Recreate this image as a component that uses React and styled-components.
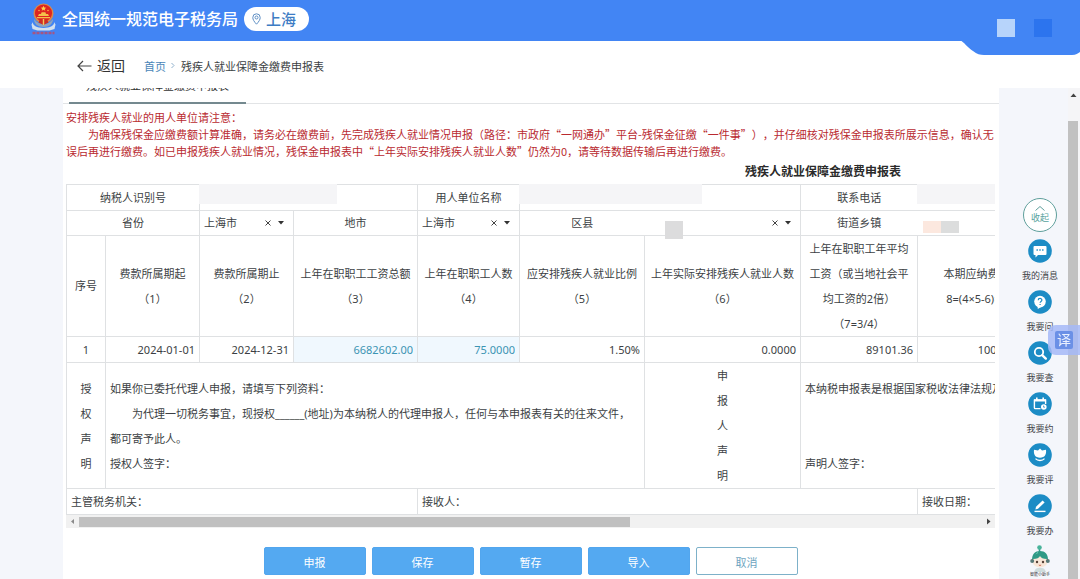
import React from "react";
import styled, { createGlobalStyle } from "styled-components";

const Global = createGlobalStyle`
  * { box-sizing: border-box; }
  body {
    margin: 0;
    background: #fff;
    color: #3c3f44;
    font-family: "Noto Sans", "Noto Sans CJK SC", sans-serif;
    font-size: 11px;
    text-spacing-trim: space-all;
  }
  button, input, select { font: inherit; color: inherit; margin: 0; padding: 0; border: 0; background: none; }
  button { cursor: pointer; }
  a { text-decoration: none; color: inherit; }
`;

const Page = styled.div`
  display: flex;
  flex-direction: column;
  height: 100vh;
  overflow: hidden;
`;

const TopBar = styled.header`
  position: relative;
  display: flex;
  align-items: center;
  flex: none;
  height: 41px;
  padding: 0 28px 4px 30px;
  background: #4285f4;
`;

const Emblem = styled.svg`
  width: 27px;
  height: 34px;
  flex: none;
`;

const SiteName = styled.h1`
  margin: 0 6px 0 5px;
  color: #fff;
  font-size: 16px;
  line-height: 24px;
  font-weight: 500;
  white-space: nowrap;
`;

const CityPill = styled.button`
  display: flex;
  align-items: center;
  gap: 5px;
  height: 24px;
  padding: 0 13px 0 8px;
  border-radius: 12px;
  background: #fff;
  color: #3d7cc4;
  font-size: 15px;
  font-weight: 500;
  line-height: 22px;
`;

const AccountNotch = styled.svg`
  position: absolute;
  right: 0;
  top: 40px;
  width: 120px;
  height: 16px;
`;

const Account = styled.div`
  position: relative;
  display: flex;
  gap: 19px;
  margin-left: auto;
  padding-top: 18px;
`;

const AccountTile = styled.span`
  width: 18px;
  height: 18px;
  background: ${(p) => p.$color};
`;

const CrumbBar = styled.nav`
  display: flex;
  align-items: center;
  flex: none;
  height: 47px;
  padding: 2px 0 0 77px;
`;

const Back = styled.a`
  display: flex;
  align-items: center;
  gap: 5px;
  margin-right: 19px;
  color: #333;
  font-size: 14px;
  line-height: 20px;
`;

const CrumbLink = styled.a`
  color: #4a86b8;
`;

const CrumbSep = styled.svg`
  width: 4px;
  height: 7px;
  margin: 0 6px 0 5px;
`;

const Body = styled.div`
  display: flex;
  flex: 1;
  min-height: 0;
  padding-left: 63px;
  background: #f4f6fb;
  overflow: hidden;
`;

const Main = styled.main`
  flex: 1;
  min-width: 0;
  background: #fff;
`;

const TabBar = styled.div`
  display: flex;
  height: 36px;
  margin-top: -20px;
  padding-left: 6px;
  border-bottom: 1px solid #e2e4e6;
`;

const Tab = styled.button`
  height: 36px;
  padding: 0 17px;
  border-bottom: 2px solid #74898f;
  color: #333;
`;

const Sheet = styled.section`
  padding: 5px 4px 0 3px;
`;

const Notice = styled.div`
  color: #b92a30;
  font-family: "Noto Sans CJK SC", sans-serif;
  line-height: 17px;

  p { margin: 0; }
  p + p { text-indent: 2em; }
`;

const TableViewport = styled.div`
  overflow: hidden;
`;

const FormTable = styled.table`
  width: 1514px;
  table-layout: fixed;
  border-collapse: collapse;
  line-height: 24px;

  caption {
    height: 24px;
    color: #2b2b2b;
    font-size: 12px;
    line-height: 24px;
    font-weight: 700;
  }
`;

const Row = styled.tr`
  height: ${(p) => p.$height || 26}px;
`;

const Cell = styled.td`
  padding: 0 4px;
  border: 1px solid #dfe1e3;
  border-left-style: ${(p) => (p.$openLeft ? "none" : "solid")};
  border-right-style: ${(p) => (p.$openRight ? "none" : "solid")};
  font-weight: 400;
  text-align: ${(p) => p.$align || "center"};
  vertical-align: middle;
  white-space: nowrap;
  background: ${(p) => (p.$editable ? "#f0f8fe" : "transparent")};
`;

const FlushCell = styled(Cell)`
  padding: 0;
  vertical-align: top;
`;

const Mask = styled.span`
  position: relative;
  display: block;
  width: ${(p) => p.$width}px;
  height: 20px;
  margin: -1px 0 0 -1px;
  background: #f5f5f7;
`;

const Field = styled.div`
  display: flex;
  align-items: center;
  height: 24px;
  padding: 0 9px 0 4px;
`;

const Picker = styled.select`
  flex: 1;
  min-width: 0;
  appearance: none;
  outline: 0;
`;

const ClearButton = styled.button`
  display: flex;
  margin-right: 7px;
`;

const Chip = styled.span`
  width: 18px;
  height: ${(p) => p.$height || 12}px;
  background: ${(p) => p.$color};
`;

const ChipRow = styled.div`
  display: flex;
  align-items: flex-end;
  height: 24px;
  padding: 0 0 2px ${(p) => p.$indent}px;
`;

const ChipField = styled(Field)`
  align-items: center;

  ${ChipRow} { height: 28px; padding-bottom: 0; margin-bottom: -4px; }
`;

const AmountInput = styled.input`
  display: block;
  width: 100%;
  height: 24px;
  color: #3b94b3;
  text-align: right;
  outline: 0;
`;

const Lines = styled.div`
  line-height: 25px;

  p { margin: 0; min-height: 25px; }
`;

const Indented = styled.p`
  text-indent: 2em;
`;

const HScroll = styled.div`
  display: flex;
  align-items: center;
  height: 13px;
  background: #f1f1f1;
`;

const ScrollArrow = styled.svg`
  flex: none;
  width: 13px;
  height: 13px;
`;

const HTrack = styled.div`
  flex: 1;
  height: 10px;
`;

const HThumb = styled.div`
  width: 61%;
  height: 100%;
  background: #c0c0c0;
`;

const Actions = styled.div`
  display: flex;
  justify-content: center;
  gap: 6px;
  padding-top: 19px;
`;

const ActionButton = styled.button`
  width: 102px;
  height: 28px;
  padding-top: 2px;
  border: 1px solid ${(p) => (p.$plain ? "#7db1c9" : "#52a6ee")};
  border-radius: 2px;
  background: ${(p) => (p.$plain ? "#fff" : "#54a9f1")};
  color: ${(p) => (p.$plain ? "#6fa5c0" : "#fff")};
`;

const Rail = styled.aside`
  display: flex;
  flex-direction: column;
  align-items: center;
  flex: none;
  width: 69px;
  padding: 110px 0 0 13px;
`;

const Collapse = styled.button`
  display: flex;
  flex-direction: column;
  align-items: center;
  width: 34px;
  height: 34px;
  margin-bottom: 7px;
  padding-top: 7px;
  border: 1px solid #5f9f9c;
  border-radius: 50%;
  background: #fff;
  color: #58a39d;
  font-size: 9px;
  line-height: 13px;
`;

const RailItem = styled.a`
  display: flex;
  flex-direction: column;
  align-items: center;
  gap: 5px;
  height: 51px;
  font-size: 9px;
  line-height: 16px;
  color: #3f4348;
  white-space: nowrap;
`;

const RailIcon = styled.svg`
  width: 24px;
  height: 24px;
`;

const Assistant = styled.a`
  display: flex;
  flex-direction: column;
  align-items: center;
  color: #333;
  font-size: 4px;
  line-height: 6px;
`;

const VScroll = styled.div`
  display: flex;
  flex-direction: column;
  flex: none;
  width: 12px;
  background: #f5f5f7;
`;

const VThumb = styled.div`
  flex: 1;
  width: 10px;
  margin-top: 20px;
  background: #c1c1c1;
`;

const Translate = styled.button`
  position: fixed;
  right: 0;
  top: 325px;
  display: flex;
  align-items: center;
  width: 32px;
  height: 30px;
  padding-left: 7px;
  border-radius: 8px 0 0 8px;
  background: rgba(165, 185, 247, 0.85);
`;

const TranslateMark = styled.span`
  width: 18px;
  height: 18px;
  border-radius: 2px;
  background: #6b90e6;
  color: #e9f0ff;
  font-size: 14px;
  line-height: 18px;
`;

const columnWidths = [39, 94, 94, 124, 102, 125, 156, 117, 118];

const headings = [
  ["费款所属期起", "（1）"],
  ["费款所属期止", "（2）"],
  ["上年在职职工工资总额", "（3）"],
  ["上年在职职工人数", "（4）"],
  ["应安排残疾人就业比例", "（5）"],
  ["上年实际安排残疾人就业人数", "（6）"],
  ["上年在职职工年平均", "工资（或当地社会平", "均工资的2倍）", "（7=3/4）"],
  ["本期应纳费额", "8=(4×5-6)×7"],
];

const railItems = [
  {
    label: "我的消息",
    icon: (
      <>
        <path d="M6.5 7h11a1 1 0 0 1 1 1v7a1 1 0 0 1-1 1H10l-2.5 2.4V16h-1a1 1 0 0 1-1-1V8a1 1 0 0 1 1-1z" fill="#fff" />
        <path d="M8.5 11h1.4M11.3 11h1.4M14.1 11h1.4" stroke="#1c8cc5" strokeWidth="1.4" />
      </>
    ),
  },
  {
    label: "我要问",
    icon: (
      <>
        <circle cx="12" cy="11.6" r="5.8" fill="#fff" />
        <path d="M9.5 15.5 9.8 19l3.2-2z" fill="#fff" />
        <path d="M10.2 10.2c0-2.4 3.7-2.3 3.7-.1 0 1.4-1.8 1.3-1.8 2.7M12.1 13.9v1.2" stroke="#1c8cc5" strokeWidth="1.2" fill="none" />
      </>
    ),
  },
  {
    label: "我要查",
    icon: (
      <>
        <circle cx="11" cy="11" r="4.2" stroke="#fff" strokeWidth="1.8" fill="none" />
        <path d="m14.2 14.2 3.6 3.4" stroke="#fff" strokeWidth="2.4" strokeLinecap="round" />
      </>
    ),
  },
  {
    label: "我要约",
    icon: (
      <>
        <path d="M12.5 16.6H7.2a.8.8 0 0 1-.8-.8V8.2h11.2V12" stroke="#fff" strokeWidth="1.4" fill="none" />
        <path d="M6 7.2h12v2.4H6zM8 5.6h1.6v2H8zM14.4 5.6H16v2h-1.6z" fill="#fff" />
        <circle cx="15.8" cy="15" r="2.8" fill="#fff" />
        <path d="M15.6 13.6v1.6h1.3" stroke="#1c8cc5" strokeWidth=".8" fill="none" />
      </>
    ),
  },
  {
    label: "我要评",
    icon: (
      <>
        <path d="M12 5.4 14 7.4l4-.6c.6 4.800-1.200 7.800-6 8-4.800-.2-6.600-3.200-6-8l4 .6z" fill="#fff" />
        <path d="M7.500 15.600c1.200 1.400 2.600 1.900 4.500 1.900s3.300-.5 4.500-1.900" stroke="#fff" strokeWidth="1.300" fill="none" />
      </>
    ),
  },
  {
    label: "我要办",
    icon: (
      <>
        <path d="m7.400 15.400.6-2.600 6.600-6.400 2 2-6.600 6.400z" fill="#fff" />
        <path d="M6.500 17.400h11" stroke="#fff" strokeWidth="1.4" />
      </>
    ),
  },
];

function TaxEmblem() {
  return (
    <Emblem viewBox="0 0 27 34" aria-hidden="true">
      <path d="M3 20c-1 3 4 6 10.500 6S25 23 24 20l1.500 2.500-1 4.500-5 1.500h-12L2.500 27l-1-4.500z" fill="#d3e0ee" />
      <path d="M4 17c0 5 4 8 9.500 8s9.500-3 9.500-8c-3 4-6 5-9.500 5S7 21 4 17z" fill="#91a4bb" />
      <circle cx="13.500" cy="11.500" r="10" fill="#d98a4c" />
      <circle cx="13.500" cy="11" r="8.600" fill="#df251f" />
      <path d="m13.500 3.800.8 1.800 2 .1-1.600 1.200.6 1.900-1.800-1.100-1.800 1.100.6-1.900-1.600-1.200 2-.1z" fill="#ffd44e" />
      <path d="M8 14h11l-1-2h-2l-.6-1.800h-3.800L11 12H9zM7 15h13v1.200H7z" fill="#f5c14a" />
      <circle cx="9" cy="8.500" r=".7" fill="#ffd44e" />
      <circle cx="18" cy="8.500" r=".7" fill="#ffd44e" />
      <path d="M10 17.500h7l1.500 3-5 2.500-5-2.500z" fill="#cf2c24" />
      <path d="M12.800 17h1.400v6h-1.400z" fill="#f4c65a" />
      <path d="M2.500 31h22" stroke="#c04a66" strokeWidth="2.500" strokeDasharray="3 1" opacity=".8" />
    </Emblem>
  );
}

function PickerControls({ label }) {
  return (
    <>
      <ClearButton type="button" aria-label={`清除${label}`}>
        <svg width="6" height="6" viewBox="0 0 6 6">
          <path d="M.5.5l5 5M5.500.5l-5 5" stroke="#444" />
        </svg>
      </ClearButton>
      <svg width="6" height="4" viewBox="0 0 6 4" aria-hidden="true">
        <path d="M0 0h6L3 3.500z" fill="#333" />
      </svg>
    </>
  );
}

function CityField({ label, value }) {
  return (
    <Field>
      <Picker aria-label={label} defaultValue={value}>
        <option value={value}>{value}</option>
      </Picker>
      <PickerControls label={label} />
    </Field>
  );
}

function DeclarationTable() {
  return (
    <FormTable>
      <caption>残疾人就业保障金缴费申报表</caption>
      <colgroup>
        {columnWidths.map((w, i) => (
          <col key={i} width={w} />
        ))}
        <col />
      </colgroup>
      <tbody>
        <Row>
          <Cell as="th" colSpan={2}>纳税人识别号</Cell>
          <FlushCell colSpan={2}><Mask $width={138} /></FlushCell>
          <Cell as="th">用人单位名称</Cell>
          <FlushCell colSpan={2}><Mask $width={183} /></FlushCell>
          <Cell as="th" $openRight>联系电话</Cell>
          <FlushCell colSpan={2} $openLeft><Mask $width={79} /></FlushCell>
        </Row>
        <Row $height={25}>
          <Cell as="th" colSpan={2}>省份</Cell>
          <FlushCell><CityField label="省份" value="上海市" /></FlushCell>
          <Cell as="th">地市</Cell>
          <FlushCell><CityField label="地市" value="上海市" /></FlushCell>
          <Cell as="th" $openRight>区县</Cell>
          <FlushCell $openLeft>
            <ChipField>
              <ChipRow $indent={16}><Chip $height={18} $color="#dcdcdd" /></ChipRow>
              <Picker aria-label="区县" defaultValue="">
                <option value="" />
              </Picker>
              <PickerControls label="区县" />
            </ChipField>
          </FlushCell>
          <Cell as="th" $openRight>街道乡镇</Cell>
          <FlushCell colSpan={2} $openLeft>
            <ChipRow $indent={5}>
              <Chip $color="#fce8df" />
              <Chip $color="#dcdddd" />
            </ChipRow>
          </FlushCell>
        </Row>
        <Row $height={101}>
          <Cell as="th">序号</Cell>
          {headings.map((lines) => (
            <Cell as="th" key={lines[0]}>
              <Lines>
                {lines.map((line) => (
                  <p key={line}>{line}</p>
                ))}
              </Lines>
            </Cell>
          ))}
          <Cell />
        </Row>
        <Row>
          <Cell>1</Cell>
          <Cell $align="right">2024-01-01</Cell>
          <Cell $align="right">2024-12-31</Cell>
          <Cell $align="right" $editable>
            <AmountInput aria-label="上年在职职工工资总额" defaultValue="6682602.00" />
          </Cell>
          <Cell $align="right" $editable>
            <AmountInput aria-label="上年在职职工人数" defaultValue="75.0000" />
          </Cell>
          <Cell $align="right">1.50%</Cell>
          <Cell $align="right">0.0000</Cell>
          <Cell $align="right">89101.36</Cell>
          <Cell $align="right">100239.03</Cell>
          <Cell />
        </Row>
        <Row $height={126}>
          <Cell as="th">
            <Lines>
              {[..."授权声明"].map((c) => (
                <p key={c}>{c}</p>
              ))}
            </Lines>
          </Cell>
          <Cell colSpan={5} $align="left">
            <Lines>
              <p>如果你已委托代理人申报，请填写下列资料：</p>
              <Indented>为代理一切税务事宜，现授权______(地址)为本纳税人的代理申报人，任何与本申报表有关的往来文件，</Indented>
              <p>都可寄予此人。</p>
              <p>授权人签字：</p>
            </Lines>
          </Cell>
          <Cell as="th">
            <Lines>
              {[..."申报人声明"].map((c) => (
                <p key={c}>{c}</p>
              ))}
            </Lines>
          </Cell>
          <Cell colSpan={3} $align="left">
            <Lines>
              <p>本纳税申报表是根据国家税收法律法规及相关规定填报的，是真实的、可靠的、完整的。</p>
              <p />
              <p />
              <p>声明人签字：</p>
            </Lines>
          </Cell>
        </Row>
        <Row>
          <Cell colSpan={4} $align="left">主管税务机关：</Cell>
          <Cell colSpan={4} $align="left">接收人：</Cell>
          <Cell colSpan={2} $align="left">接收日期：</Cell>
        </Row>
      </tbody>
    </FormTable>
  );
}

export default function App() {
  return (
    <Page>
      <Global />
      <TopBar>
        <TaxEmblem />
        <SiteName>全国统一规范电子税务局</SiteName>
        <CityPill type="button">
          <svg width="9" height="12" viewBox="0 0 9 12" aria-hidden="true">
            <path d="M4.500 11.200C2 8.500.8 6.500.8 4.500a3.700 3.700 0 0 1 7.400 0c0 2-1.200 4-3.700 6.700z" fill="none" stroke="#5f8fc4" />
            <circle cx="4.500" cy="4.500" r="1.500" fill="none" stroke="#5f8fc4" />
          </svg>
          上海
        </CityPill>
        <AccountNotch viewBox="0 0 120 16" aria-hidden="true">
          <path d="M0 0C4 2 8 8 13 11c4 3 7 4 11 4h88c4 0 6-2 8-3V0z" fill="#4285f4" />
        </AccountNotch>
        <Account>
          <AccountTile $color="#b7d4fb" />
          <AccountTile $color="#2c74ee" />
        </Account>
      </TopBar>

      <CrumbBar>
        <Back href="#back">
          <svg width="15" height="12" viewBox="0 0 15 12" aria-hidden="true">
            <path d="M14.500 6H1M6 1 1 6l5 5" fill="none" stroke="#444" strokeWidth="1.200" />
          </svg>
          返回
        </Back>
        <CrumbLink href="#home">首页</CrumbLink>
        <CrumbSep viewBox="0 0 4 7" aria-hidden="true">
          <path d="m.5 1 2.500 2.500L.5 6" fill="none" stroke="#8fb0cc" />
        </CrumbSep>
        <span>残疾人就业保障金缴费申报表</span>
      </CrumbBar>

      <Body>
        <Main>
          <TabBar>
            <Tab type="button">残疾人就业保障金缴费申报表</Tab>
          </TabBar>
          <Sheet>
            <Notice>
              <p>安排残疾人就业的用人单位请注意：</p>
              <p>
                为确保残保金应缴费额计算准确，请务必在缴费前，先完成残疾人就业情况申报（路径：市政府“一网通办”平台-残保金征缴“一件事”），并仔细核对残保金申报表所展示信息，确认无误后再进行缴费。如已申报残疾人就业情况，残保金申报表中“上年实际安排残疾人就业人数”仍然为0，请等待数据传输后再进行缴费。
              </p>
            </Notice>
            <TableViewport>
              <DeclarationTable />
            </TableViewport>
            <HScroll>
              <ScrollArrow viewBox="0 0 13 13"><path d="M8 4v5L5 6.500z" fill="#8a8a8a" /></ScrollArrow>
              <HTrack><HThumb /></HTrack>
              <ScrollArrow viewBox="0 0 13 13"><path d="M5 3.500v6l3.500-3z" fill="#444" /></ScrollArrow>
            </HScroll>
            <Actions>
              <ActionButton type="button">申报</ActionButton>
              <ActionButton type="button">保存</ActionButton>
              <ActionButton type="button">暂存</ActionButton>
              <ActionButton type="button">导入</ActionButton>
              <ActionButton type="button" $plain>取消</ActionButton>
            </Actions>
          </Sheet>
        </Main>

        <Rail>
          <Collapse type="button">
            <svg width="10" height="5" viewBox="0 0 10 5" aria-hidden="true">
              <path d="m.5 4.500 4.500-4 4.500 4" fill="none" stroke="#5f9f9c" />
            </svg>
            收起
          </Collapse>
          {railItems.map((item) => (
            <RailItem key={item.label} href="#service">
              <RailIcon viewBox="0 0 24 24" aria-hidden="true">
                <circle cx="12" cy="12" r="11.800" fill="#1c8cc5" />
                {item.icon}
              </RailIcon>
              {item.label}
            </RailItem>
          ))}
          <Assistant href="#assistant">
            <svg width="20" height="27" viewBox="0 0 20 27" aria-hidden="true">
              <path d="M9.500 7V2" stroke="#2f9a86" strokeWidth="1.500" />
              <circle cx="9.500" cy="2.500" r="2.300" fill="#48b39a" />
              <path d="M2 15C2 9 5 6 10 6s8 3 8 9z" fill="#2f9a86" />
              <path d="M8 7c-2 1-3 3-3 5h3z" fill="#7fd0bd" />
              <ellipse cx="10" cy="16.500" rx="7.500" ry="6" fill="#f8e7d8" />
              <path d="M3 14c4 0 6-1 7-3 1 2 3 3 7 3l-1-4-6-3-6 3z" fill="#2f9a86" />
              <circle cx="2.200" cy="16" r="2" fill="#587a78" />
              <circle cx="17.800" cy="16" r="2" fill="#587a78" />
              <circle cx="7" cy="17" r="1.200" fill="#553f35" />
              <circle cx="13" cy="17" r="1.200" fill="#553f35" />
              <path d="M8.800 20q1.200 1 2.400 0" stroke="#c0503f" fill="none" strokeWidth=".8" />
              <path d="M5 25c1-3 9-3 10 0l1 2H4z" fill="#cfdcdc" />
            </svg>
            智能小助手
          </Assistant>
        </Rail>
        <VScroll>
          <ScrollArrow viewBox="0 0 13 13"><path d="M2.500 9h6l-3-3.500z" fill="#444" /></ScrollArrow>
          <VThumb />
        </VScroll>
      </Body>

      <Translate type="button" aria-label="翻译">
        <TranslateMark>译</TranslateMark>
      </Translate>
    </Page>
  );
}
